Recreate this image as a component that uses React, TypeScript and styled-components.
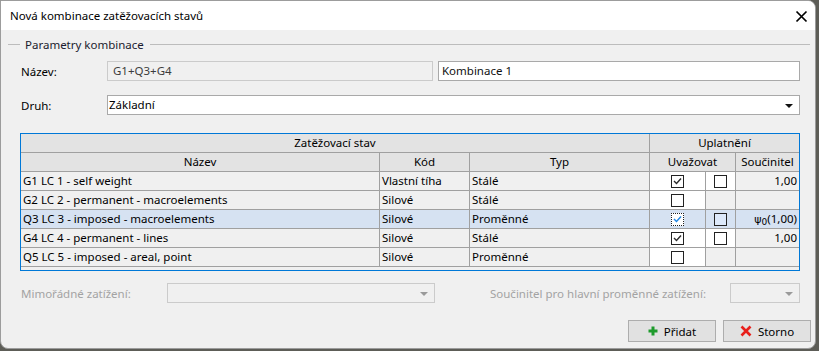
import React from 'react';
import styled, { createGlobalStyle } from 'styled-components';

const GlobalStyle = createGlobalStyle`
  html, body {
    margin: 0;
    padding: 0;
  }
  body {
    background: #5d5d57;
    font-family: "Noto Sans", "Open Sans", sans-serif;
    font-size: 11.5px;
    color: #000;
  }
`;

type LoadCase = {
  id: string;
  name: string;
  code: string;
  type: string;
  checked: boolean;
  hasSecond: boolean;
  coef: string;
  psi?: boolean;
  selected?: boolean;
};

const loadCases: LoadCase[] = [
  { id: 'g1', name: 'G1 LC 1 - self weight', code: 'Vlastní tíha', type: 'Stálé', checked: true, hasSecond: true, coef: '1,00' },
  { id: 'g2', name: 'G2 LC 2 - permanent - macroelements', code: 'Silové', type: 'Stálé', checked: false, hasSecond: false, coef: '' },
  { id: 'q3', name: 'Q3 LC 3 - imposed - macroelements', code: 'Silové', type: 'Proměnné', checked: true, hasSecond: true, coef: '(1,00)', psi: true, selected: true },
  { id: 'g4', name: 'G4 LC 4 - permanent - lines', code: 'Silové', type: 'Stálé', checked: true, hasSecond: true, coef: '1,00' },
  { id: 'q5', name: 'Q5 LC 5 - imposed - areal, point', code: 'Silové', type: 'Proměnné', checked: false, hasSecond: false, coef: '' },
];

const Dialog = styled.div`
  width: 816px;
  height: 349px;
  box-sizing: border-box;
  border: 1px solid #9c9c9c;
  border-radius: 0 8px 8px 8px;
  background: #f0f0f0;
  overflow: hidden;
  display: flex;
  flex-direction: column;
`;

const TitleBar = styled.div`
  height: 29px;
  flex-shrink: 0;
  background: #fff;
  display: flex;
  align-items: center;
  justify-content: space-between;
  padding: 0 7px 0 9px;
`;

const Title = styled.span`
  font-size: 11.5px;
  color: #000;
  margin-top: -1px;
`;

const CloseButton = styled.span`
  display: flex;
  width: 13px;
  height: 13px;
  margin-top: 1px;
`;

const GroupHeader = styled.div`
  display: flex;
  align-items: center;
  height: 16px;
  margin: 6px 5px 0 7px;
  color: #1b1b2e;

  &::before {
    content: '';
    width: 12px;
    border-top: 1px solid #bcbcbc;
  }
  &::after {
    content: '';
    flex: 1;
    border-top: 1px solid #bcbcbc;
  }
`;

const GroupTitle = styled.span`
  padding: 0 6px 0 5px;
`;

const Body = styled.div`
  padding: 0 15px 0 19px;
  display: flex;
  flex-direction: column;
`;

const FieldRow = styled.div<{ $top: number }>`
  display: grid;
  grid-template-columns: 87px 1fr;
  align-items: center;
  margin-top: ${(p) => p.$top}px;
  height: 20px;
`;

const Label = styled.span<{ $disabled?: boolean }>`
  padding-left: 1px;
  color: ${(p) => (p.$disabled ? '#a3a3a3' : '#000')};
`;

const InputPair = styled.div`
  display: grid;
  grid-template-columns: 326px 1fr;
  gap: 5px;
`;

const TextBox = styled.div<{ $disabled?: boolean }>`
  height: 20px;
  box-sizing: border-box;
  border: 1px solid ${(p) => (p.$disabled ? '#cbcbcb' : '#a9a9a9')};
  background: ${(p) => (p.$disabled ? '#f0f0f0' : '#fff')};
  color: ${(p) => (p.$disabled ? '#3c3c3c' : '#111')};
  padding: 0 ${(p) => (p.$disabled ? '5px' : '3px')};
  line-height: 18px;
  white-space: nowrap;
`;

const Select = styled.div<{ $disabled?: boolean; $width?: number; $gap?: number }>`
  height: 20px;
  box-sizing: border-box;
  border: 1px solid ${(p) => (p.$disabled ? '#cbcbcb' : '#a9a9a9')};
  background: ${(p) => (p.$disabled ? '#f0f0f0' : '#fff')};
  width: ${(p) => (p.$width ? `${p.$width}px` : 'auto')};
  margin-left: ${(p) => p.$gap || 0}px;
  display: flex;
  align-items: center;
  justify-content: space-between;
  padding: 0 6px 0 1px;
  line-height: 18px;
`;

const Arrow = styled.span<{ $disabled?: boolean }>`
  width: 0;
  height: 0;
  border-left: 4px solid transparent;
  border-right: 4px solid transparent;
  border-top: 4px solid ${(p) => (p.$disabled ? '#9a9a9a' : '#111')};
  margin-top: 1px;
`;

const Table = styled.div`
  margin-top: 18px;
  display: grid;
  grid-template-columns: 359px 90px 180px 56px 30px 1fr;
  border: 1px solid #0078d7;
  padding-bottom: 3px;
  background: #f0f0f0;
`;

const Cell = styled.div<{
  $span?: number;
  $head?: boolean;
  $align?: 'left' | 'center' | 'right';
  $last?: boolean;
  $bg?: string;
}>`
  grid-column: span ${(p) => p.$span || 1};
  height: 19px;
  box-sizing: border-box;
  border-bottom: 1px solid #a0a0a0;
  border-right: ${(p) => (p.$last ? 'none' : '1px solid #a0a0a0')};
  background: ${(p) => p.$bg || (p.$head ? '#e3e3e3' : '#f0f0f0')};
  text-align: ${(p) => p.$align || 'left'};
  line-height: 18px;
  padding: 0 2px;
  white-space: nowrap;
  overflow: hidden;
  display: ${(p) => (p.$align === 'center' && !p.$head ? 'flex' : 'block')};
  align-items: center;
  justify-content: center;
`;

const Box = styled.span<{ $focused?: boolean; $tint?: boolean }>`
  width: 13px;
  height: 13px;
  box-sizing: border-box;
  border: 1px ${(p) => (p.$focused ? 'dotted' : 'solid')} #222;
  background: ${(p) => (p.$tint ? '#dde9fa' : '#fff')};
  display: flex;
  align-items: center;
  justify-content: center;
`;

const Psi = styled.span`
  font-family: "DejaVu Sans", sans-serif;
  font-size: 11px;
`;

const Sub = styled.sub`
  font-size: 9px;
  vertical-align: -2px;
  line-height: 0;
`;

const BottomRow = styled.div`
  margin-top: 12px;
  height: 20px;
  display: flex;
  align-items: center;
`;

const BottomLabel = styled(Label)`
  width: 146px;
`;

const Spacer = styled.div`
  flex: 1;
`;

const ButtonRow = styled.div`
  display: flex;
  justify-content: flex-end;
  gap: 7px;
  margin-top: 17px;
  padding-right: 4px;
`;

const Button = styled.button`
  width: 88px;
  height: 22px;
  box-sizing: border-box;
  border: 1px solid #adadad;
  background: #e1e1e1;
  font-family: inherit;
  font-size: 11.5px;
  color: #000;
  display: flex;
  align-items: center;
  justify-content: center;
  gap: 6px;
  padding: 0;
`;

const Check: React.FC<{ color: string }> = ({ color }) => (
  <svg width="9" height="8" viewBox="0 0 9 8">
    <polyline points="1,4 3.5,6.5 8,1.5" fill="none" stroke={color} strokeWidth="1.4" />
  </svg>
);

const CheckBox: React.FC<{ checked: boolean; focused?: boolean; tint?: boolean }> = ({ checked, focused, tint }) => (
  <Box $focused={focused} $tint={tint}>
    {checked && <Check color={focused ? '#1f86e6' : '#2a2a2a'} />}
  </Box>
);

const App: React.FC = () => {
  return (
    <>
      <GlobalStyle />
      <Dialog>
        <TitleBar>
          <Title>Nová kombinace zatěžovacích stavů</Title>
          <CloseButton>
            <svg width="13" height="13" viewBox="0 0 13 13">
              <path d="M1.5 1.5 L11.5 11.5 M11.5 1.5 L1.5 11.5" stroke="#000" strokeWidth="1.7" />
            </svg>
          </CloseButton>
        </TitleBar>

        <GroupHeader>
          <GroupTitle>Parametry kombinace</GroupTitle>
        </GroupHeader>

        <Body>
          <FieldRow $top={9}>
            <Label>Název:</Label>
            <InputPair>
              <TextBox $disabled>G1+Q3+G4</TextBox>
              <TextBox>Kombinace 1</TextBox>
            </InputPair>
          </FieldRow>

          <FieldRow $top={14}>
            <Label>Druh:</Label>
            <Select>
              <span>Základní</span>
              <Arrow />
            </Select>
          </FieldRow>

          <Table>
            <Cell $head $span={3} $align="center">Zatěžovací stav</Cell>
            <Cell $head $span={3} $align="center" $last>Uplatnění</Cell>
            <Cell $head $align="center">Název</Cell>
            <Cell $head $align="center">Kód</Cell>
            <Cell $head $align="center">Typ</Cell>
            <Cell $head $span={2} $align="center">Uvažovat</Cell>
            <Cell $head $align="center" $last>Součinitel</Cell>

            {loadCases.map((lc) => {
              const bg = lc.selected ? '#d6e2f2' : undefined;
              return (
                <React.Fragment key={lc.id}>
                  <Cell $bg={bg}>{lc.name}</Cell>
                  <Cell $bg={bg}>{lc.code}</Cell>
                  <Cell $bg={bg}>{lc.type}</Cell>
                  <Cell $align="center" $bg={bg || '#fff'}>
                    <CheckBox checked={lc.checked} focused={lc.selected} />
                  </Cell>
                  <Cell $align="center" $bg={lc.hasSecond ? bg || '#fff' : bg}>
                    {lc.hasSecond && <CheckBox checked={false} tint={lc.selected} />}
                  </Cell>
                  <Cell $align="right" $last $bg={bg}>
                    {lc.psi && (
                      <Psi>
                        ψ<Sub>0</Sub>
                      </Psi>
                    )}
                    {lc.coef}
                  </Cell>
                </React.Fragment>
              );
            })}
          </Table>

          <BottomRow>
            <BottomLabel $disabled>Mimořádné zatížení:</BottomLabel>
            <Select $disabled $width={268}>
              <span />
              <Arrow $disabled />
            </Select>
            <Spacer />
            <Label $disabled>Součinitel pro hlavní proměnné zatížení:</Label>
            <Select $disabled $width={70} $gap={24}>
              <span />
              <Arrow $disabled />
            </Select>
          </BottomRow>
        </Body>

        <ButtonRow>
          <Button>
            <svg width="10" height="10" viewBox="0 0 10 10">
              <path d="M5 0.5 V9.5 M0.5 5 H9.5" stroke="#1e9b2c" strokeWidth="3" />
            </svg>
            Přidat
          </Button>
          <Button>
            <svg width="12" height="12" viewBox="0 0 12 12">
              <path d="M1.5 1.5 L10.5 10.5 M10.5 1.5 L1.5 10.5" stroke="#e8201c" strokeWidth="2.6" />
            </svg>
            Storno
          </Button>
        </ButtonRow>
      </Dialog>
    </>
  );
};

export default App;
